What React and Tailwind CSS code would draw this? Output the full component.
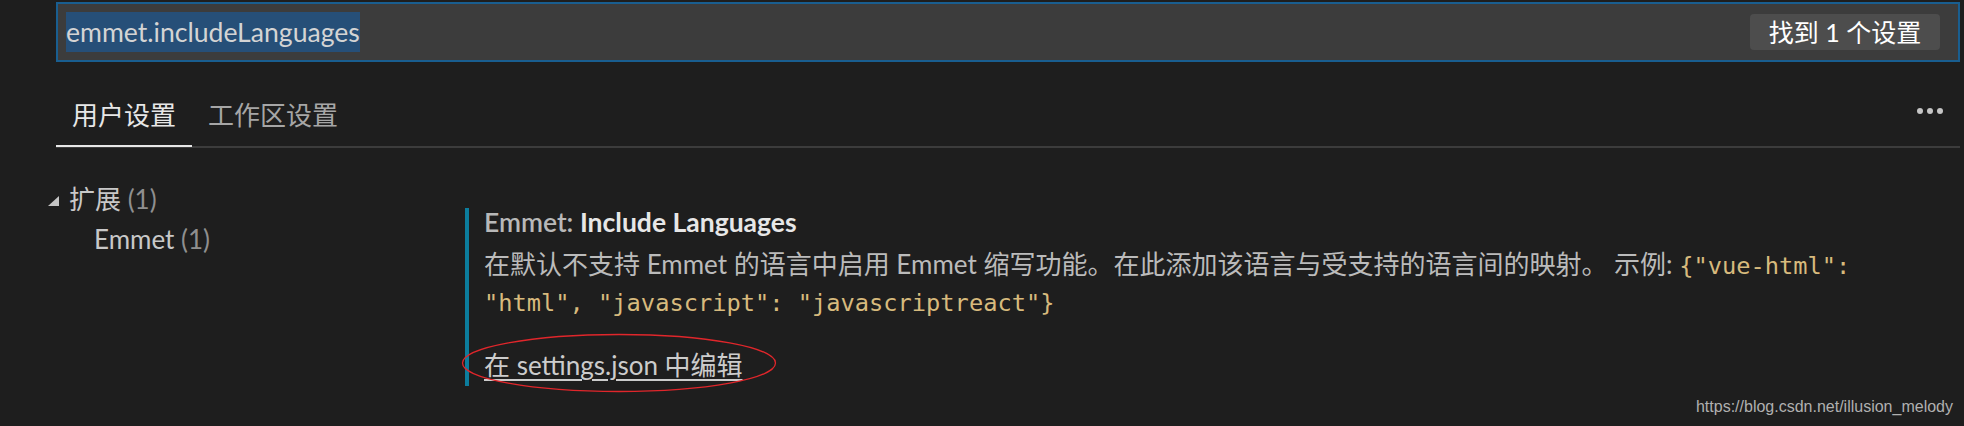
import React from "react";

// VS Code settings editor — search result for emmet.includeLanguages

const UI_FONT = { fontFamily: '"Lato", "Noto Sans CJK SC", sans-serif' };
const MONO_FONT = { fontFamily: '"DejaVu Sans Mono", monospace' };

function SearchBar() {
  return (
    <div className="pt-[2px] pl-[56px] pr-[4px]">
      <div className="h-[60px] border-2 border-[#195e90] bg-[#3c3c3c] flex items-center pl-[8px] pr-[18px]">
        <span className="bg-[#264f78] text-[#d4d4d4] text-[26.6px] leading-[40px] h-[40px]">
          emmet.includeLanguages
        </span>
        <span className="ml-auto bg-[#4d4d4d] text-white text-[25px] leading-[36px] h-[36px] w-[190px] text-center rounded-[4px]">
          找到 1 个设置
        </span>
      </div>
    </div>
  );
}

function Tabs() {
  return (
    <div className="mt-[22px] ml-[56px] mr-[4px] flex items-center border-b-2 border-[#3c3c3c]">
      <div className="h-[62px] px-[16px] flex items-center text-[26px] text-[#e7e7e7] border-b-2 border-[#e7e7e7] -mb-[2px]">
        用户设置
      </div>
      <div className="h-[62px] px-[16px] flex items-center text-[26px] text-[#a6a6a6]">
        工作区设置
      </div>
      <div className="ml-auto mr-[17px] mb-[8px] flex gap-[4px]">
        <div className="w-[6px] h-[6px] rounded-full bg-[#c5c5c5]" />
        <div className="w-[6px] h-[6px] rounded-full bg-[#c5c5c5]" />
        <div className="w-[6px] h-[6px] rounded-full bg-[#c5c5c5]" />
      </div>
    </div>
  );
}

function Tree() {
  return (
    <div className="w-[465px] shrink-0 pt-[31px] pl-[48px]">
      <div className="h-[40px] flex items-center">
        <svg width="11" height="10" viewBox="0 0 11 10" className="mt-[4px]">
          <polygon points="11,0 11,10 0,10" fill="#c5c5c5" />
        </svg>
        <span className="ml-[10px] text-[26px] text-[#c8c8c8]">
          扩展 <span className="text-[#8f8f8f]">(1)</span>
        </span>
      </div>
      <div className="h-[40px] flex items-center pl-[46px] text-[26px] text-[#c8c8c8]">
        Emmet&nbsp;<span className="text-[#8f8f8f]">(1)</span>
      </div>
    </div>
  );
}

function SettingItem() {
  return (
    <div className="mt-[60px] border-l-4 border-[#0c7d9d] pl-[15px] pb-[7px]">
      <div className="text-[26.5px] leading-[28px]">
        <span className="text-[#b8b8b8] font-semibold">Emmet: </span>
        <span className="text-[#e7e7e7] font-bold">Include Languages</span>
      </div>
      <div className="mt-[11px] text-[26px] leading-[35px] text-[#bbbbbb]">
        在默认不支持 Emmet 的语言中启用 Emmet 缩写功能。在此添加该语言与受支持的语言间的映射。 示例:{" "}
        <span className="text-[#d7ba7d] text-[23.7px]" style={MONO_FONT}>
          {'{"vue-html":'}
          <br />
          {'"html", "javascript": "javascriptreact"}'}
        </span>
      </div>
      <div className="mt-[30px] text-[26px] leading-[28px] text-[#cccccc] underline underline-offset-[4px]">
        在 settings.json 中编辑
      </div>
    </div>
  );
}

export default function App() {
  return (
    <div className="w-[1964px] h-[426px] bg-[#1e1e1e] relative overflow-hidden" style={UI_FONT}>
      <SearchBar />
      <Tabs />
      <div className="flex">
        <Tree />
        <SettingItem />
      </div>

      {/* red annotation ellipse around the link */}
      <svg className="absolute left-[461px] top-[333px]" width="316" height="60" viewBox="0 0 316 60">
        <ellipse cx="158" cy="30" rx="156.5" ry="28.5" fill="none" stroke="#e0262b" strokeWidth="1.3" />
      </svg>

      {/* watermark */}
      <div
        className="absolute right-[11px] top-[396px] text-[16px] leading-[22px] text-[#b0b0b0]"
        style={{ fontFamily: '"Liberation Sans Narrow", "Liberation Sans", sans-serif' }}
      >
        https://blog.csdn.net/illusion_melody
      </div>
    </div>
  );
}
